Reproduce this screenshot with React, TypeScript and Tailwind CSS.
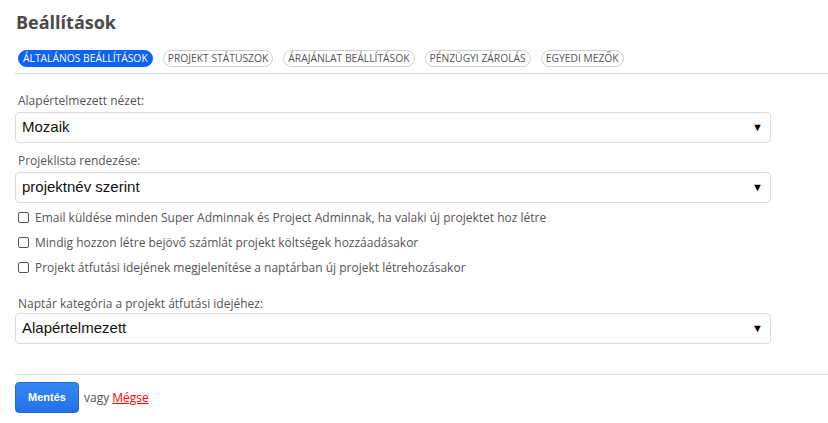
import React from 'react';

const tabs = [
  "Általános beállítások",
  "Projekt státuszok",
  "Árajánlat beállítások",
  "Pénzügyi zárolás",
  "Egyedi mezők",
];

const checks = [
  "Email küldése minden Super Adminnak és Project Adminnak, ha valaki új projektet hoz létre",
  "Mindig hozzon létre bejövő számlát projekt költségek hozzáadásakor",
  "Projekt átfutási idejének megjelenítése a naptárban új projekt létrehozásakor",
];

const Select = ({ value }: { value: string }) => (
  <div className="relative h-[31px] w-[756px] rounded-[4px] border border-[#dcdcdc] bg-white flex items-center pl-[6px] font-['Liberation_Sans',Arial,sans-serif] text-[15px] text-[#111]">
    {value}
    <span className="absolute right-[7px] top-[9px] text-[11px] leading-none text-black">▼</span>
  </div>
);

export default function App() {
  return (
    <div className="w-[828px] h-[423px] bg-white font-['Open_Sans',sans-serif] text-[#555] overflow-hidden">
      <h1 className="pl-[16px] pt-[9px] text-[18px] font-bold leading-[26px] text-[#4a4a4a]">Beállítások</h1>

      <div className="ml-[15px] mt-[15px] border-b border-[#d6d6d6] pb-[6px] flex gap-[10px] pl-[3px]">
        {tabs.map((t, i) => (
          <span
            key={t}
            className={
              i === 0
                ? "h-[17px] px-[4px] rounded-full bg-[#0d63f3] border border-[#0d63f3] text-white text-[10.3px] leading-[15px] uppercase"
                : "h-[17px] px-[4px] rounded-full border border-[#cfcfcf] text-[#555] text-[10.3px] leading-[15px] uppercase"
            }
          >
            {t}
          </span>
        ))}
      </div>

      <div className="pl-[15px]">
        <div className="mt-[19px] pl-[3px] text-[12px] leading-[16px]">Alapértelmezett nézet:</div>
        <div className="mt-[3px]"><Select value="Mozaik" /></div>

        <div className="mt-[10px] pl-[3px] text-[12px] leading-[16px]">Projeklista rendezése:</div>
        <div className="mt-[3px]"><Select value="projektnév szerint" /></div>

        <div className="mt-[6px] flex flex-col gap-[8px] pl-[3px]">
          {checks.map((c) => (
            <label key={c} className="flex items-center gap-[6px] text-[12px] leading-[17px]">
              <span className="w-[11px] h-[11px] border border-[#555] rounded-[2px] bg-white" />
              {c}
            </label>
          ))}
        </div>

        <div className="mt-[20px] pl-[3px] text-[12px] leading-[16px]">Naptár kategória a projekt átfutási idejéhez:</div>
        <div className="mt-[1px]"><Select value="Alapértelmezett" /></div>
      </div>

      <div className="ml-[15px] mt-[30px] border-t border-[#dcdcdc] pt-[7px] flex items-center gap-[5px]">
        <button className="w-[64px] h-[31px] rounded-[4px] bg-gradient-to-b from-[#3686f4] to-[#2471e8] border border-[#2168d8] text-white font-bold text-[11px] font-['Liberation_Sans',Arial,sans-serif]">
          Mentés
        </button>
        <span className="text-[12px]">vagy <a className="text-[#f00] underline">Mégse</a></span>
      </div>
    </div>
  );
}
